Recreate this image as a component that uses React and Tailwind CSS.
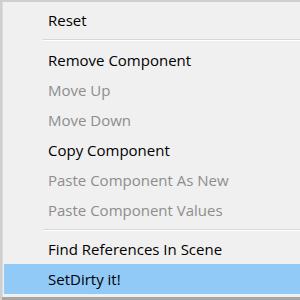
import React from 'react';

const items = [
  { label: 'Reset' },
  { sep: true, cls: 'mt-[4px] mb-[4px]' },
  { label: 'Remove Component' },
  { label: 'Move Up', disabled: true },
  { label: 'Move Down', disabled: true },
  { label: 'Copy Component' },
  { label: 'Paste Component As New', disabled: true },
  { label: 'Paste Component Values', disabled: true },
  { sep: true, cls: 'mt-[4px] mb-[3px]' },
  { label: 'Find References In Scene' },
  { label: 'SetDirty it!', active: true },
];

export default function App() {
  return (
    <div
      className="w-[300px] h-[300px] overflow-hidden bg-[#cfcfcf] pt-[2px] pl-[2px]"
      style={{ fontFamily: '"Open Sans", "Noto Sans", sans-serif' }}
    >
      <div className="h-[295px] bg-[#f0f0f0] border-l border-[#dcdcdc] pt-[3px] pl-[1px] flex flex-col">
        {items.map((item, idx) =>
          item.sep ? (
            <div key={idx} className={`ml-[39px] border-t border-[#d7d7d7] border-b border-b-white ${item.cls}`} />
          ) : (
            <div
              key={idx}
              className={`h-[30px] shrink-0 flex items-center pl-[44px] text-[15px] ${
                item.active ? 'bg-[#91c9f7]' : ''
              } ${item.disabled ? 'text-[#8d8d8d]' : 'text-black'}`}
            >
              {item.label}
            </div>
          )
        )}
      </div>
      <div className="h-[3px] bg-[#a6a6a6]" />
    </div>
  );
}
